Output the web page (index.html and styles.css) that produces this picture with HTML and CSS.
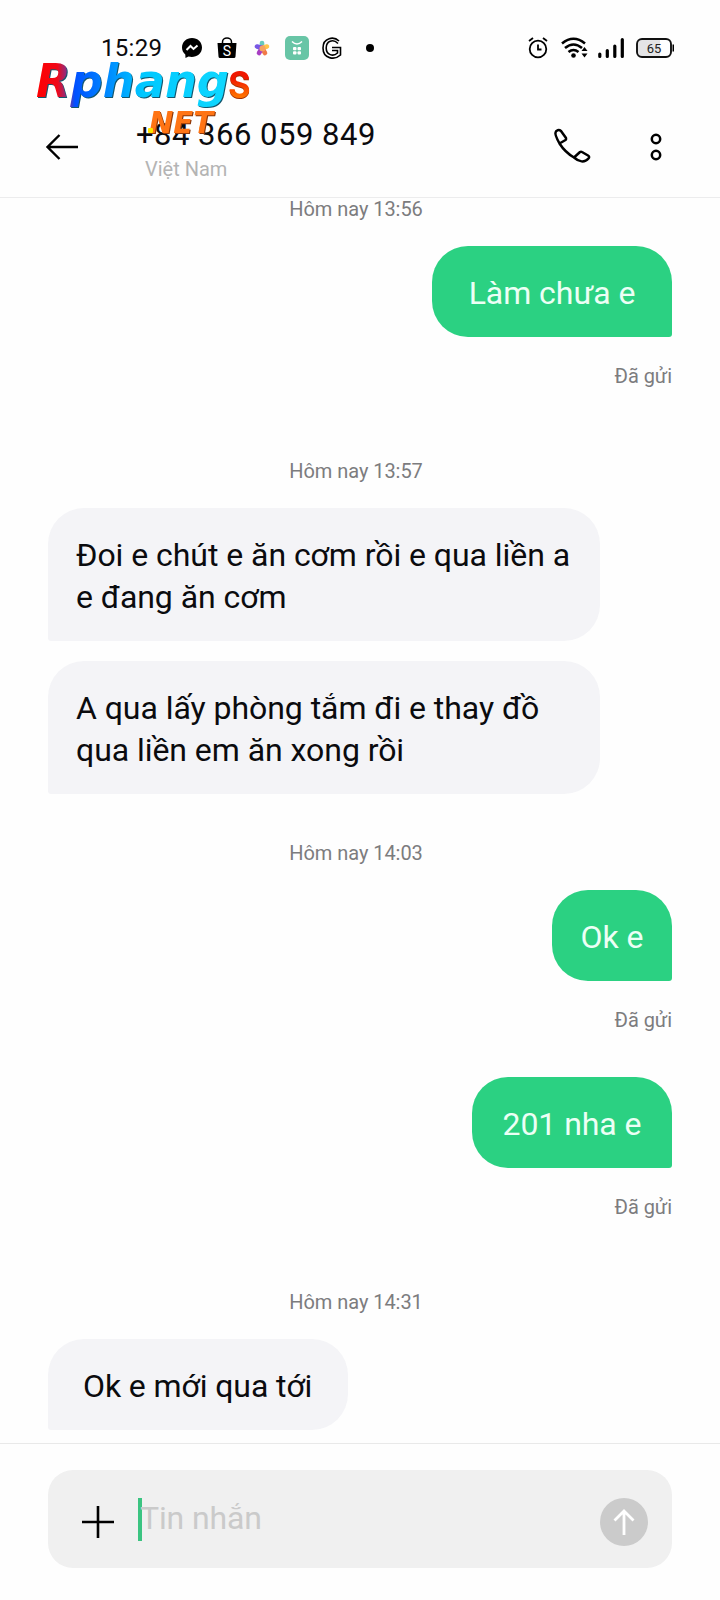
FILE: index.html
```html
<!DOCTYPE html>
<html lang="vi">
<head>
<meta charset="utf-8">
<title>Tin nhắn</title>
<link rel="stylesheet" href="styles.css">
</head>
<body>
<div class="phone">
  <div class="status">
    <span class="clock">15:29</span>
    <div class="notices">
      <svg width="20" height="20" viewBox="0 0 20 20"><path d="M10 0C4.300 0 0 4 0 9.500c0 3 1.300 5.300 3.300 7L3.500 20l3-1.500c6.500 1.800 13.500-2 13.500-9C20 4 15.700 0 10 0z"/><path d="M4.500 12 8.500 8l3 3 4-3.500" fill="none" stroke="#fff" stroke-width="2"/></svg>
      <svg width="20" height="22" viewBox="0 0 20 22"><path d="M5.500 7V5a4.500 4 0 0 1 9 0v2" fill="none" stroke="#000" stroke-width="1.500"/><path d="M.5 6h19l-1 13.500q-.1 1.500-1.500 1.500H3q-1.400 0-1.500-1.500z"/><text class="bag-letter" x="10" y="18.500" text-anchor="middle">S</text></svg>
      <svg class="star" width="16" height="16" viewBox="0 0 16 16"><g stroke-width="4.600" stroke-linecap="round"><path d="M8 8V3" stroke="#68c9bd"/><path d="m8 8 5-1.500" stroke="#ffc64b"/><path d="m8 8 3 5" stroke="#f17948"/><path d="m8 8-3 5" stroke="#a83fc3"/><path d="M8 8 3 6.500" stroke="#7757e5"/></g><circle cx="8.500" cy="8.500" r="3" fill="#f6a260"/></svg>
      <svg width="24" height="24" viewBox="0 0 24 24"><rect width="24" height="24" rx="5" fill="#68c5a6"/><path d="M7 5.500q5 5 10 0" fill="none" stroke="#fff" stroke-width="1.500"/><g fill="#fff"><rect x="8" y="11" width="3.500" height="3.300" rx="1"/><rect x="12.500" y="11" width="3.500" height="3.300" rx="1"/><rect x="8" y="15.300" width="3.500" height="3.300" rx="1"/><rect x="12.500" y="15.300" width="3.500" height="3.300" rx="1"/></g></svg>
      <svg width="20" height="22" viewBox="0 0 20 22"><g fill="none" stroke="#000" stroke-width="1.600"><path d="M17 4C12-.8 1 .2 1 11s11.500 12.500 17.500 7v-7.500H10"/><path d="M16 6.500C11 1.500 4.200 4 4.200 11s7 9 11.300 5v-2.500H10"/></g></svg>
      <svg width="8" height="8" viewBox="0 0 8 8"><circle cx="4" cy="4" r="4"/></svg>
    </div>
    <div class="system">
      <svg width="20" height="22" viewBox="0 0 20 22"><g fill="none" stroke="#000" stroke-width="1.800"><circle cx="10" cy="12" r="8.300"/><path d="M10 7.500V12.500h3.500M1 4l4-3M19 4l-4-3"/></g></svg>
      <svg class="wifi" width="27" height="22" viewBox="0 0 27 22"><g fill="none" stroke="#000" stroke-width="2.600"><path d="M1 6.500q11.500-9.500 23 0M4 11q8.500-7 17 0M7.500 15q5-4 10 0"/></g><circle cx="12.500" cy="18.500" r="2.300"/><path d="m20.500 14 3-4 3 4zM20.500 16.500l3 4 3-4z"/></svg>
      <svg class="signal" width="26" height="20" viewBox="0 0 26 20"><g stroke="#000" stroke-width="3.200" stroke-linecap="round"><path d="M1.800 16v2.400M9.300 12.500v5.900M16.800 8v10.400M24.300 1.600v16.800"/></g></svg>
      <svg class="battery" width="39" height="20" viewBox="0 0 39 20"><rect x="1" y="1" width="34" height="18" rx="5" fill="#fff"/><path d="M6 1h18v18H6q-5 0-5-5V6q0-5 5-5" fill="#e4e4e6"/><rect x="1" y="1" width="34" height="18" rx="5" fill="none" stroke="#111" stroke-width="1.900"/><path d="M36.500 6.500h1.500v7h-1.500z"/><text class="level" x="18" y="14.800" text-anchor="middle">65</text></svg>
    </div>
  </div>

  <header class="header">
    <svg class="back" width="32" height="26" viewBox="0 0 32 26"><path d="M32 13H1.500M13.500 1 1.500 13l12 12" fill="none" stroke="#000" stroke-width="2.400"/></svg>
    <div class="contact">
      <div class="number">+84 366 059 849</div>
      <div class="country">Việt Nam</div>
    </div>
    <svg class="call" width="36" height="34" viewBox="0 0 36 34"><path d="M5.500 14.500C3 10 1 5 1.500 3.500 2 1 5 .3 7 2l5 7q.5 1-.5 2L5.500 14.500C9 20 14 25 20 28.500l6-5.500q1-.7 2 0l6 3.500q2 1.300.5 3c-4 4.500-9.500 3.500-14.500-1" fill="none" stroke="#000" stroke-width="2.500" stroke-linejoin="round"/></svg>
    <svg class="more" width="12" height="28" viewBox="0 0 12 28"><g fill="none" stroke="#000" stroke-width="2.500"><circle cx="6" cy="6" r="4.200"/><circle cx="6" cy="22" r="4.200"/></g></svg>
  </header>

  <main class="thread">
    <div class="stamp first">Hôm nay 13:56</div>
    <div class="bubble out w-long">Làm chưa e</div>
    <div class="sent">Đã gửi</div>
    <div class="stamp after-sent">Hôm nay 13:57</div>
    <div class="bubble in tall">Đoi e chút e ăn cơm rồi e qua liền a<br>e đang ăn cơm</div>
    <div class="bubble in tall next">A qua lấy phòng tắm đi e thay đồ<br>qua liền em ăn xong rồi</div>
    <div class="stamp after-in">Hôm nay 14:03</div>
    <div class="bubble out w-short">Ok e</div>
    <div class="sent">Đã gửi</div>
    <div class="bubble out w-mid after-status">201 nha e</div>
    <div class="sent">Đã gửi</div>
    <div class="stamp after-sent">Hôm nay 14:31</div>
    <div class="bubble in w-reply">Ok e mới qua tới</div>
  </main>

  <footer class="composer">
    <div class="field">
      <svg class="plus" width="32" height="32" viewBox="0 0 32 32"><path d="M0 16h32M16 0v32" stroke="#000" stroke-width="2.600"/></svg>
      <span class="caret"></span>
      <span class="placeholder">Tin nhắn</span>
      <svg class="send" width="48" height="48" viewBox="0 0 48 48"><circle cx="24" cy="24" r="24" fill="#cbcbcb"/><path d="M24 37V13M14.500 22.500 24 13l9.500 9.500" fill="none" stroke="#fff" stroke-width="2.800"/></svg>
    </div>
  </footer>

  <svg class="brand" width="220" height="80" viewBox="0 0 220 80">
    <defs>
      <linearGradient id="ink" gradientUnits="userSpaceOnUse" x1="4" y1="0" x2="198" y2="0"><stop offset="0" stop-color="#f00"/><stop offset=".11" stop-color="#f00818"/><stop offset=".17" stop-color="#7038a0"/><stop offset=".2" stop-color="#0050ff"/><stop offset=".4" stop-color="#0094ff"/><stop offset=".55" stop-color="#00c8ff"/><stop offset="1" stop-color="#10d8ff"/></linearGradient>
      <linearGradient id="ember" gradientUnits="userSpaceOnUse" x1="0" y1="14" x2="0" y2="41"><stop offset=".25" stop-color="#f01800"/><stop offset=".9" stop-color="#ff7100"/></linearGradient>
    </defs>
    <text class="word" x="4" y="39" fill="url(#ink)" textLength="193" lengthAdjust="spacingAndGlyphs">Rphang</text>
    <text class="tail" x="196" y="40" fill="url(#ember)" textLength="23" lengthAdjust="spacingAndGlyphs">s</text>
    <text class="net" x="117" y="75" fill="#ff7414" textLength="64" lengthAdjust="spacingAndGlyphs">NET</text>
    <rect x="116" y="70" width="5" height="5" rx="1" fill="#ffe600"/>
  </svg>
</div>
</body>
</html>
```
FILE: styles.css
```css
* { box-sizing: border-box; }
body { margin: 0; background: #fefefe; font-family: Roboto, "Noto Sans", sans-serif; color: #0b0b0e; }
svg { display: block; flex: none; overflow: visible; }
.phone { position: relative; width: 720px; height: 1600px; overflow: hidden; display: flex; flex-direction: column; }

.status { height: 96px; padding: 0 45px 0 101px; display: flex; align-items: center; }
.clock { width: 81px; font-size: 24px; letter-spacing: 0.3px; white-space: nowrap; }
.notices { display: flex; align-items: center; }
.notices svg { margin-right: 15px; }
.notices .star { margin: 0 15px 0 2px; }
.notices svg:nth-child(4) { margin-right: 13px; }
.notices svg:nth-child(5) { margin-right: 24px; }
.bag-letter { font-size: 14px; fill: #fff; }
.system { margin-left: auto; display: flex; align-items: center; }
.wifi { margin-left: 13px; }
.signal { margin-left: 10px; }
.battery { margin-left: 12px; }
.level { font-size: 13px; fill: #222; }

.header { height: 102px; padding: 0 58px 0 46px; display: flex; align-items: flex-start; border-bottom: 1px solid #ececed; }
.back { margin-top: 38px; }
.contact { margin-left: 58px; padding-top: 20px; }
.number { font-size: 31px; line-height: 38px; letter-spacing: 0.5px; white-space: nowrap; }
.country { padding: 3px 0 0 9px; font-size: 20px; line-height: 24px; color: #b4b4b4; }
.call { margin: 33px 0 0 auto; }
.more { margin: 37px 0 0 60px; }

.thread { height: 1245px; display: flex; flex-direction: column; overflow: hidden; }
.stamp { flex: none; height: 24px; padding-right: 8px; text-align: center; font-size: 20px; line-height: 24px; letter-spacing: -0.05px; color: #7c7c7e; }
.first { margin: -1px 0 25px; }
.after-sent { margin: 71px 0 25px; }
.after-in { margin: 47px 0 25px; }
.bubble { flex: none; height: 91px; font-size: 32px; line-height: 42px; letter-spacing: -0.05px; white-space: nowrap; }
.out { align-self: flex-end; margin-right: 48px; padding-top: 26px; text-align: center; color: #ecfff5; background: #2bd182; border-radius: 36px 36px 3px 36px; }
.in { margin-left: 48px; padding: 26px 0 0 28px; background: #f4f4f7; border-radius: 36px 36px 36px 3px; }
.tall { width: 552px; height: 133px; }
.next { margin-top: 20px; }
.w-long { width: 240px; }
.w-short { width: 120px; }
.w-mid { width: 200px; }
.w-reply { width: 300px; padding-left: 35px; letter-spacing: -0.1px; }
.sent { flex: none; height: 24px; margin: 27px 48px 0 0; text-align: right; font-size: 20px; line-height: 24px; letter-spacing: -0.05px; color: #7c7c7e; }
.after-status { margin-top: 45px; }

.composer { flex: 1; padding: 26px 48px 0; border-top: 1px solid #e9e9e9; }
.field { height: 98px; padding: 0 24px 0 34px; display: flex; align-items: center; background: #f0f0f0; border-radius: 25px; }
.plus, .send { margin-top: 6px; }
.caret { width: 4px; height: 43px; margin-left: 24px; background: #3bc481; }
.placeholder { margin: -2px 0 0 -2px; font-size: 32px; letter-spacing: -0.15px; color: #cacaca; }
.send { margin-left: auto; }

.brand { position: absolute; left: 32px; top: 58px; }
.word { font: italic 700 46px "DejaVu Sans", sans-serif; filter: drop-shadow(1px 1.500px 0 #14566d); }
.tail { font: 500 50px Roboto, sans-serif; filter: drop-shadow(0.500px 1px 0 #a22d00); }
.net { font: italic 700 31px "DejaVu Sans", sans-serif; filter: drop-shadow(1px 1px 0 #8c3709); }
```
